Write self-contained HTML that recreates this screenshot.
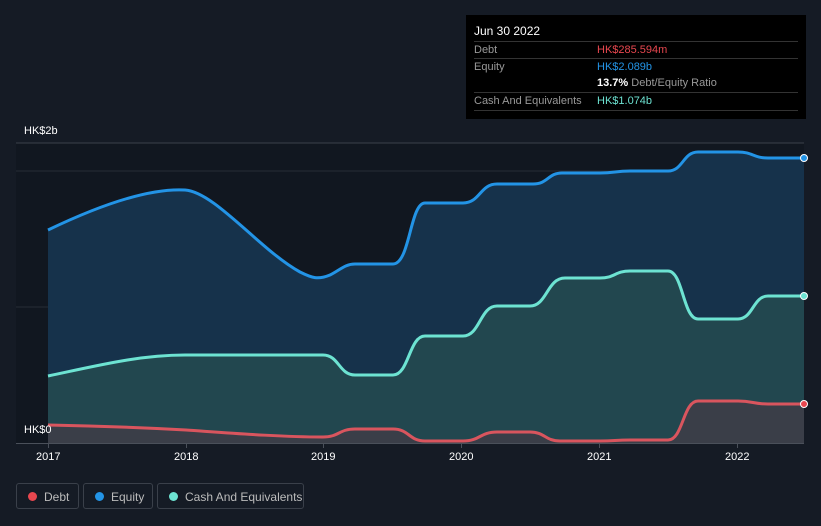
<!DOCTYPE html>
<html><head><meta charset="utf-8"><style>
body{margin:0;width:821px;height:526px;background:#151b25;font-family:"Liberation Sans",sans-serif;overflow:hidden;position:relative}
.tt{position:absolute;left:466px;top:15px;width:340px;height:104px;background:#000;color:#fff;font-size:11px}
.tt .h{position:absolute;left:8px;top:9px;font-size:12px}
.row{position:absolute;left:8px;width:324px;border-top:1px solid #333;height:17px;line-height:17px;color:#999}
.row span{position:absolute;left:123px}
.leg{position:absolute;top:483px;height:26px;border:1px solid #3a404a;border-radius:3px;color:#bbb;font-size:12px;line-height:26px;box-sizing:border-box}
.leg i{position:absolute;left:11px;top:8px;width:9px;height:9px;border-radius:50%}
.leg b{font-weight:normal;position:absolute;left:27px}
.ax{position:absolute;color:#fff;font-size:11px}
</style></head><body>
<svg width="821" height="526" style="position:absolute;left:0;top:0">
<rect x="16" y="143" width="788" height="300" fill="#111720"/>
<line x1="16" y1="143" x2="804" y2="143" stroke="#3a404a"/>
<line x1="16" y1="171" x2="804" y2="171" stroke="#262c36"/>
<line x1="16" y1="307" x2="804" y2="307" stroke="#262c36"/>
<path d="M48,230 C100,205 150,188 185,190 C215,192 260,250 300,272 C312,278 318,280 330,275 C340,270 345,264 355,264 L393,264 C410,264 410,203 425,203 L463,203 C480,203 480,184 497,184 L533,184 C548,184 548,173 562,173 L600,173 C615,173 615,171 630,171 L668,171 C683,171 683,152 698,152 L738,152 C753,152 753,158 768,158 L804,158 L804,443 L48,443 Z" fill="#16324b"/>
<path d="M48,376 C100,365 140,355 185,355 L323,355 C339,355 339,375 355,375 L393,375 C409,375 409,336 425,336 L463,336 C480,336 480,306 497,306 L530,306 C547,306 547,278 565,278 L600,278 C615,278 615,271 630,271 L668,271 C683,271 683,319 698,319 L738,319 C753,319 753,296 768,296 L804,296 L804,443 L48,443 Z" fill="#22474f"/>
<path d="M48,425 C100,426 150,428 186,430 C230,433 280,437 323,437 C339,437 339,429 355,429 L393,429 C409,429 409,441 425,441 L463,441 C480,441 480,432 497,432 L530,432 C545,432 545,441 560,441 L600,441 C615,441 615,440 630,440 L668,440 C683,440 683,401 698,401 L738,401 C753,401 753,404 768,404 L804,404 L804,443 L48,443 Z" fill="#3a3e48"/>
<path d="M48,230 C100,205 150,188 185,190 C215,192 260,250 300,272 C312,278 318,280 330,275 C340,270 345,264 355,264 L393,264 C410,264 410,203 425,203 L463,203 C480,203 480,184 497,184 L533,184 C548,184 548,173 562,173 L600,173 C615,173 615,171 630,171 L668,171 C683,171 683,152 698,152 L738,152 C753,152 753,158 768,158 L804,158" fill="none" stroke="#2394e6" stroke-width="3"/>
<path d="M48,376 C100,365 140,355 185,355 L323,355 C339,355 339,375 355,375 L393,375 C409,375 409,336 425,336 L463,336 C480,336 480,306 497,306 L530,306 C547,306 547,278 565,278 L600,278 C615,278 615,271 630,271 L668,271 C683,271 683,319 698,319 L738,319 C753,319 753,296 768,296 L804,296" fill="none" stroke="#6de3d2" stroke-width="3"/>
<path d="M48,425 C100,426 150,428 186,430 C230,433 280,437 323,437 C339,437 339,429 355,429 L393,429 C409,429 409,441 425,441 L463,441 C480,441 480,432 497,432 L530,432 C545,432 545,441 560,441 L600,441 C615,441 615,440 630,440 L668,440 C683,440 683,401 698,401 L738,401 C753,401 753,404 768,404 L804,404" fill="none" stroke="#d9555e" stroke-width="3"/>
<line x1="16" y1="443.5" x2="804" y2="443.5" stroke="#4a505a"/>
<g stroke="#4a505a"><line x1="48.5" y1="443" x2="48.5" y2="448"/><line x1="186.5" y1="443" x2="186.5" y2="448"/><line x1="323.5" y1="443" x2="323.5" y2="448"/><line x1="461.5" y1="443" x2="461.5" y2="448"/><line x1="599.5" y1="443" x2="599.5" y2="448"/><line x1="737.5" y1="443" x2="737.5" y2="448"/></g>
<circle cx="804" cy="158" r="3.5" fill="#2394e6" stroke="#fff"/>
<circle cx="804" cy="296" r="3.5" fill="#6de3d2" stroke="#fff"/>
<circle cx="804" cy="404" r="3.5" fill="#e8474f" stroke="#fff"/>
</svg>
<div class="ax" style="left:24px;top:125px">HK$2b</div>
<div class="ax" style="left:24px;top:424px">HK$0</div>
<div class="ax" style="left:36px;top:451px">2017</div>
<div class="ax" style="left:174px;top:451px">2018</div>
<div class="ax" style="left:311px;top:451px">2019</div>
<div class="ax" style="left:449px;top:451px">2020</div>
<div class="ax" style="left:587px;top:451px">2021</div>
<div class="ax" style="left:725px;top:451px">2022</div>
<div class="tt"><div class="h">Jun 30 2022</div>
<div class="row" style="top:26px">Debt<span style="color:#e8474f">HK$285.594m</span></div>
<div class="row" style="top:43px">Equity<span style="color:#2394e6">HK$2.089b</span></div>
<div class="row" style="top:60px;border:0"><span style="color:#fff"><b>13.7%</b> <em style="font-style:normal;color:#999">Debt/Equity Ratio</em></span></div>
<div class="row" style="top:77px">Cash And Equivalents<span style="color:#6de3d2">HK$1.074b</span></div>
<div class="row" style="top:95px;height:0"></div>
</div>
<div class="leg" style="left:16px;width:63px"><i style="background:#e8474f"></i><b>Debt</b></div>
<div class="leg" style="left:83px;width:70px"><i style="background:#2394e6"></i><b>Equity</b></div>
<div class="leg" style="left:157px;width:147px"><i style="background:#6de3d2"></i><b>Cash And Equivalents</b></div>
</body></html>
